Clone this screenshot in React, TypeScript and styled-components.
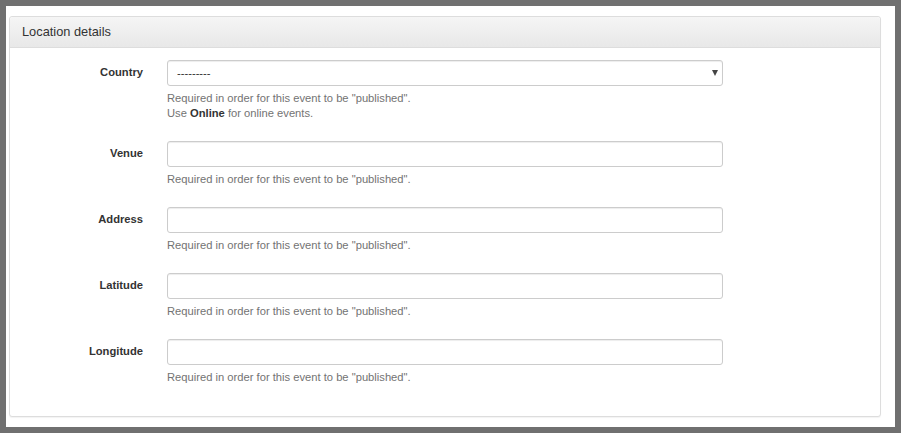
import React from "react";
import styled, { createGlobalStyle } from "styled-components";

const Global = createGlobalStyle`
  html, body { margin: 0; padding: 0; }
  body { font-family: "Liberation Sans", Arial, Helvetica, sans-serif; color: #333; }
  * { box-sizing: border-box; }
`;

const Frame = styled.div`
  min-height: 100vh;
  border: 6px solid #707070;
  background: #fff;
  padding: 10px 14px 10px 3px;
`;

const Panel = styled.section`
  border: 1px solid #ddd;
  border-radius: 3px;
  background: #fff;
  box-shadow: 0 1px 1px rgba(0, 0, 0, 0.05);
`;

const Heading = styled.header`
  height: 31px;
  padding: 0 12px 2px;
  display: flex;
  align-items: center;
  background: linear-gradient(#f5f5f5, #e8e8e8);
  border-bottom: 1px solid #ddd;
  border-radius: 3px 3px 0 0;
  font-size: 12.8px;
  color: #333;
`;

const Body = styled.div`
  padding: 12px 0 24px;
`;

const Group = styled.div`
  display: grid;
  grid-template-columns: 133px 556px;
  column-gap: 24px;
  margin-bottom: 13px;
  &:last-child { margin-bottom: 0; }
`;

const Label = styled.label`
  text-align: right;
  font-weight: bold;
  font-size: 11.2px;
  line-height: 16px;
  padding-top: 4px;
  color: #333;
`;

const Control = styled.div`
  display: flex;
  flex-direction: column;
`;

const TextInput = styled.input`
  display: block;
  width: 100%;
  height: 26px;
  padding: 4px 10px;
  border: 1px solid #ccc;
  border-radius: 3px;
  background: #fff;
  font-family: inherit;
  font-size: 11.2px;
  color: #555;
  box-shadow: inset 0 1px 1px rgba(0, 0, 0, 0.075);
  outline: none;
`;

const SelectWrap = styled.div`
  position: relative;
`;

const Select = styled.select`
  display: block;
  width: 100%;
  height: 26px;
  padding: 3px 22px 3px 9px;
  border: 1px solid #ccc;
  border-radius: 3px;
  background: #fff;
  font-family: inherit;
  font-size: 11.2px;
  color: #333;
  appearance: none;
  -webkit-appearance: none;
  box-shadow: inset 0 1px 1px rgba(0, 0, 0, 0.075);
  outline: none;
`;

const Arrow = styled.span`
  position: absolute;
  right: 5px;
  top: 10px;
  width: 0;
  height: 0;
  border-left: 3.5px solid transparent;
  border-right: 3.5px solid transparent;
  border-top: 6px solid #444;
  pointer-events: none;
`;

const Help = styled.p`
  margin: 5px 0 7px;
  font-size: 11.2px;
  line-height: 15px;
  color: #737373;
  b { color: #333; }
`;

const REQ = 'Required in order for this event to be "published".';

const fields = ["Venue", "Address", "Latitude", "Longitude"];

export default function App() {
  return (
    <>
      <Global />
      <Frame>
        <Panel>
          <Heading>Location details</Heading>
          <Body>
            <Group>
              <Label htmlFor="country">Country</Label>
              <Control>
                <SelectWrap>
                  <Select id="country" defaultValue="">
                    <option value="">---------</option>
                  </Select>
                  <Arrow />
                </SelectWrap>
                <Help>
                  {REQ}
                  <br />
                  Use <b>Online</b> for online events.
                </Help>
              </Control>
            </Group>
            {fields.map((f) => (
              <Group key={f}>
                <Label htmlFor={f.toLowerCase()}>{f}</Label>
                <Control>
                  <TextInput id={f.toLowerCase()} type="text" />
                  <Help>{REQ}</Help>
                </Control>
              </Group>
            ))}
          </Body>
        </Panel>
      </Frame>
    </>
  );
}
